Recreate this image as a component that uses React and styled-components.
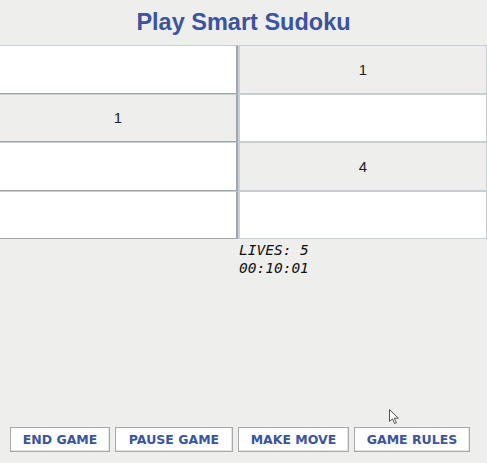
import styled, { createGlobalStyle } from "styled-components";

const GlobalStyle = createGlobalStyle`
  html, body {
    margin: 0;
    padding: 0;
    background: #eeefec;
  }
`;

const Page = styled.div`
  position: relative;
  width: 487px;
  height: 463px;
  display: flex;
  flex-direction: column;
  background: #eeefec;
  font-family: "Liberation Sans", Arial, sans-serif;
  overflow: hidden;
`;

const Title = styled.h1`
  margin: 0;
  height: 45px;
  line-height: 44px;
  text-align: center;
  font-size: 23.5px;
  font-weight: bold;
  color: #3b54a0;
`;

const Board = styled.div`
  display: grid;
  grid-template-columns: 238px 1fr;
  grid-auto-rows: 48.5px;
`;

const Cell = styled.div`
  box-sizing: border-box;
  display: flex;
  align-items: center;
  justify-content: center;
  font-family: "Liberation Sans", Arial, sans-serif;
  font-size: 15px;
  color: #222;
  background: ${(p) => (p.$filled ? "#eeefec" : "#ffffff")};
  border: 1px solid #c4ced4;
  border-right: ${(p) => (p.$left ? "2px solid #a4a6a6" : "1px solid #c4ced4")};
  border-bottom: ${(p) => (p.$left ? "1px solid #a4a6a6" : "1px solid #c4ced4")};
  border-left: ${(p) => (p.$left ? "none" : "2px solid #c6d2da")};
`;

const Status = styled.div`
  padding: 2px 0 0 239px;
  font-family: "DejaVu Sans Mono", monospace;
  font-style: italic;
  font-size: 14.5px;
  line-height: 18px;
  color: #111;
`;

const Spacer = styled.div`
  flex: 1;
`;

const Toolbar = styled.div`
  display: flex;
  gap: 5px;
  padding: 0 0 11px 10px;
`;

const Button = styled.button`
  height: 25px;
  width: ${(p) => p.$w}px;
  box-sizing: border-box;
  background: #fff;
  border: 1px solid #a8a8a8;
  box-shadow: inset -1px -1px 0 #e4e4e4;
  font-family: "DejaVu Sans", Verdana, sans-serif;
  font-weight: bold;
  font-size: 12.5px;
  color: #3b54a0;
  padding: 0;
  cursor: default;
`;

const Cursor = styled.svg`
  position: absolute;
  left: 389px;
  top: 409px;
`;

const cells = [
  ["", "1"],
  ["1", ""],
  ["", "4"],
  ["", ""],
];

export default function App() {
  return (
    <>
      <GlobalStyle />
      <Page>
        <Title>Play Smart Sudoku</Title>
        <Board>
          {cells.map((row, r) =>
            row.map((v, c) => (
              <Cell key={`${r}-${c}`} $left={c === 0} $filled={v !== ""}>
                {v}
              </Cell>
            ))
          )}
        </Board>
        <Status>
          <div>LIVES: 5</div>
          <div>00:10:01</div>
        </Status>
        <Spacer />
        <Toolbar>
          <Button $w={100}>END GAME</Button>
          <Button $w={118}>PAUSE GAME</Button>
          <Button $w={111}>MAKE MOVE</Button>
          <Button $w={116}>GAME RULES</Button>
        </Toolbar>
        <Cursor width="12" height="16" viewBox="0 0 12 16">
          <path d="M0.5 0.5 L0.5 12.5 L3.5 9.8 L5.6 14.6 L7.4 13.8 L5.3 9.2 L9.3 9.2 Z" fill="#fff" stroke="#555" strokeWidth="1" />
        </Cursor>
      </Page>
    </>
  );
}
